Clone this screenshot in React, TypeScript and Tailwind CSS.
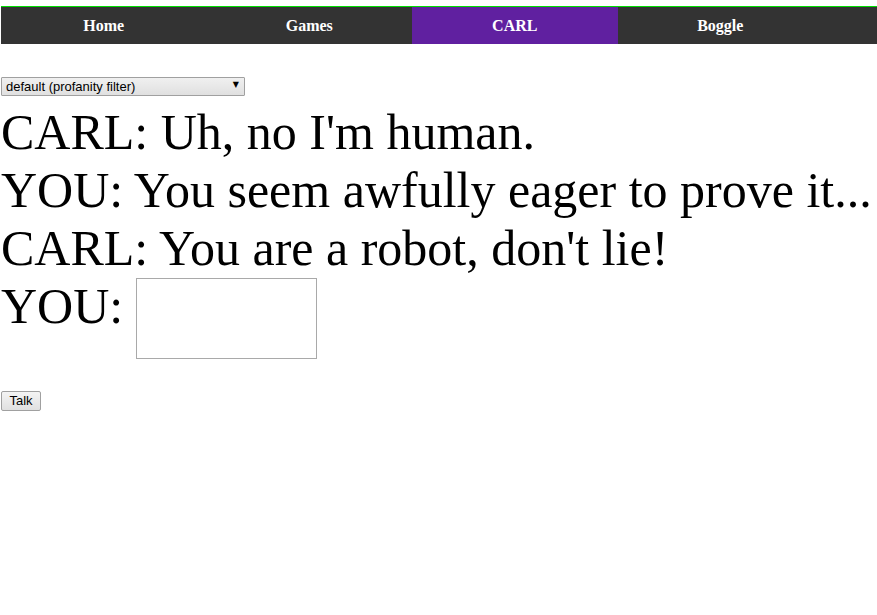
const tabs = ["Home", "Games", "CARL", "Boggle"];

const lines = [
  "CARL: Uh, no I'm human.",
  "YOU: You seem awfully eager to prove it...",
  "CARL: You are a robot, don't lie!",
];

export default function App() {
  return (
    <div className="min-h-[615px] bg-white pt-[6px] pl-px font-['Liberation_Serif',serif] text-black">
      {/* nav bar */}
      <div className="border-t border-[#00dd00] bg-[#333333]">
        <div className="grid h-[37px] w-[822px] grid-cols-4">
          {tabs.map((t) => (
            <div
              key={t}
              className={
                t === "CARL"
                  ? "flex items-center justify-center bg-[#6020a0] text-[16px] font-bold text-white"
                  : "flex items-center justify-center text-[16px] font-bold text-white"
              }
            >
              {t}
            </div>
          ))}
        </div>
      </div>

      {/* personality picker */}
      <div className="relative mt-[33px] h-[19px] w-[244px]">
        <select
          defaultValue="default"
          className="block h-[19px] w-[244px] appearance-none rounded-[1px] border border-[#a0a0a0] bg-gradient-to-b from-[#f0f0f0] to-[#e0e0e0] pl-[4px] font-['Liberation_Sans',Arial,sans-serif] text-[13px] leading-[17px] text-black outline-none"
        >
          <option value="default">default (profanity filter)</option>
        </select>
        <span className="pointer-events-none absolute top-[-1px] right-[6px] font-['DejaVu_Sans',sans-serif] text-[8px] leading-[17px] text-black">
          ▼
        </span>
      </div>

      {/* conversation */}
      <div className="mt-[7px] text-[50px] leading-[58px] whitespace-nowrap">
        {lines.map((l, i) => (
          <div key={i}>{l}</div>
        ))}
        <div className="flex items-start">
          <span>YOU:</span>
          <textarea className="mt-px ml-[13px] h-[81px] w-[181px] resize-none border border-[#a9a9a9] bg-white outline-none" />
        </div>
      </div>

      <button className="mt-[32px] block h-[20px] w-[40px] rounded-[2px] border border-[#a0a0a0] bg-gradient-to-b from-[#f4f4f4] to-[#e0e0e0] font-['Liberation_Sans',Arial,sans-serif] text-[13px] leading-[16px] text-black">
        Talk
      </button>
    </div>
  );
}
